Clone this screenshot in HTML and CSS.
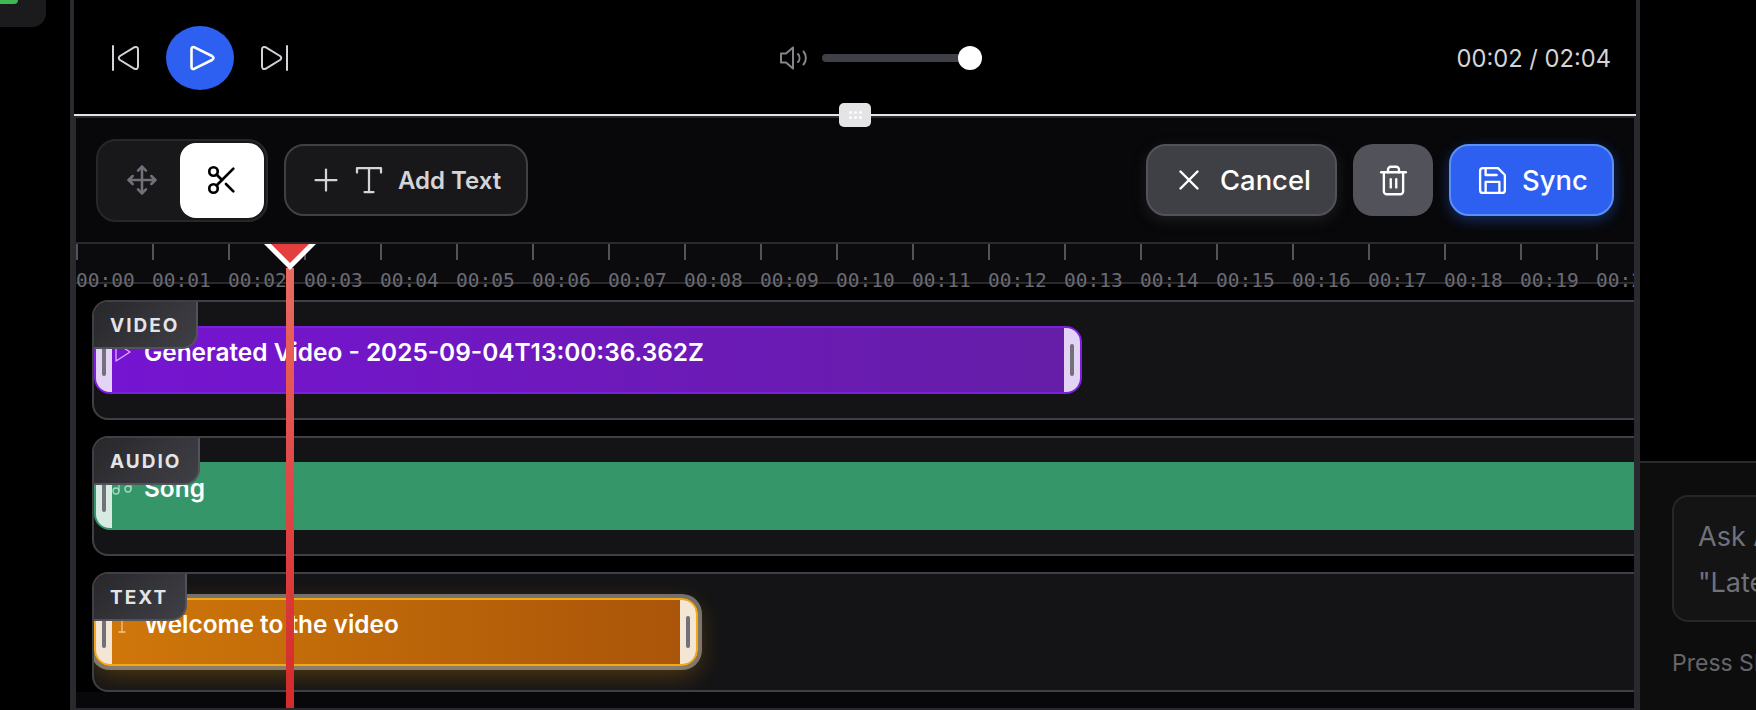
FILE: index.html
```html
<!DOCTYPE html>
<html lang="en-US">
<head>
   <meta charset="UTF-8"><title>timeline editor</title>
   <link rel="stylesheet" href="styles.css">
</head> <body>

<nav class="sidebar">
   <div class="app-chip"><span class="app-dot"></span></div>
</nav>

<main class="editor">

   <section class="player">
      <div class="transport">
         <button class="icon-btn" aria-label="previous">
            <svg width="27" height="26" viewBox="0 0 27 26"><path d="M1 1v24"/><path d="M22.5 2.2 8 11q-2.5 2 0 4l14.5 8.8q3.5 1.2 3.5-2.8V5q0-4-3.5-2.8z"/></svg>
         </button>
         <button class="play-btn" aria-label="play">
            <svg width="25" height="26" viewBox="0 0 25 26"><path d="M4.500 2.300 22 11q3 2 0 4L4.500 23.700q-3 1.300-3-2.200V4.500q0-3.500 3-2.200z"/></svg>
         </button>
         <button class="icon-btn" aria-label="next">
            <svg width="27" height="26" viewBox="0 0 27 26"><path d="M26 1v24"/><path d="M4.500 2.200 19 11q2.500 2 0 4L4.500 23.800Q1 25 1 21V5q0-4 3.500-2.800z"/></svg>
         </button>
      </div>

      <div class="volume">
         <svg class="volume-icon" width="30" height="24" viewBox="0 0 30 24"><path d="M14 1.500 7 7.500H2v9h5l7 6z"/><path d="M19 8a6 6 0 0 1 0 8"/><path d="M24.500 5.500a10 10 0 0 1 0 13"/></svg>
         <div class="volume-track"><span class="volume-thumb"></span></div>
      </div>

      <div class="clock">00:02 / 02:04</div>

      <div class="resize-grip">
         <span></span><span></span><span></span><span></span><span></span><span></span>
      </div>
   </section>

   <section class="timeline">

      <div class="toolbar">
         <div class="toolbar-group">
            <div class="mode-switch">
               <button class="mode-btn">
                  <svg width="32" height="32" viewBox="0 0 24 24"><path d="m5 9-3 3 3 3"/><path d="m9 5 3-3 3 3"/><path d="m15 19-3 3-3-3"/><path d="m19 9 3 3-3 3"/><path d="M2 12h20"/><path d="M12 2v20"/></svg>
               </button>
               <button class="mode-btn active">
                  <svg width="34" height="34" viewBox="0 0 24 24"><circle cx="6" cy="6" r="3"/><path d="M8.120 8.120 12 12"/><path d="M20 4 8.120 15.880"/><circle cx="6" cy="18" r="3"/><path d="M14.800 14.800 20 20"/></svg>
               </button>
            </div>
            <button class="btn btn-add">
               <svg width="36" height="36" viewBox="0 0 24 24"><path d="M5 12h14"/><path d="M12 5v14"/></svg>
               <svg width="36" height="36" viewBox="0 0 24 24"><path d="M4 7V4h16v3"/><path d="M9 20h6"/><path d="M12 4v16"/></svg>
               <span>Add Text</span>
            </button>
         </div>

         <div class="toolbar-group">
            <button class="btn btn-cancel">
               <svg width="34" height="34" viewBox="0 0 24 24"><path d="M18 6 6 18"/><path d="m6 6 12 12"/></svg>
               <span>Cancel</span>
            </button>
            <button class="btn btn-trash" aria-label="delete">
               <svg width="33" height="33" viewBox="0 0 24 24"><path d="M3 6h18"/><path d="M19 6v14c0 1-1 2-2 2H7c-1 0-2-1-2-2V6"/><path d="M8 6V4c0-1 1-2 2-2h4c1 0 2 1 2 2v2"/><path d="M10 11v6"/><path d="M14 11v6"/></svg>
            </button>
            <button class="btn btn-sync">
               <svg width="33" height="33" viewBox="0 0 24 24"><path d="M19 21H5a2 2 0 0 1-2-2V5a2 2 0 0 1 2-2h11l5 5v11a2 2 0 0 1-2 2z"/><path d="M17 21v-8H7v8"/><path d="M7 3v5h8"/></svg>
               <span>Sync</span>
            </button>
         </div>
      </div>

      <div class="ruler">
         <div class="mark"><i></i><span>00:00</span></div>
         <div class="mark"><i></i><span>00:01</span></div>
         <div class="mark"><i></i><span>00:02</span></div>
         <div class="mark"><i></i><span>00:03</span></div>
         <div class="mark"><i></i><span>00:04</span></div>
         <div class="mark"><i></i><span>00:05</span></div>
         <div class="mark"><i></i><span>00:06</span></div>
         <div class="mark"><i></i><span>00:07</span></div>
         <div class="mark"><i></i><span>00:08</span></div>
         <div class="mark"><i></i><span>00:09</span></div>
         <div class="mark"><i></i><span>00:10</span></div>
         <div class="mark"><i></i><span>00:11</span></div>
         <div class="mark"><i></i><span>00:12</span></div>
         <div class="mark"><i></i><span>00:13</span></div>
         <div class="mark"><i></i><span>00:14</span></div>
         <div class="mark"><i></i><span>00:15</span></div>
         <div class="mark"><i></i><span>00:16</span></div>
         <div class="mark"><i></i><span>00:17</span></div>
         <div class="mark"><i></i><span>00:18</span></div>
         <div class="mark"><i></i><span>00:19</span></div>
         <div class="mark"><i></i><span>00:20</span></div>
      </div>

      <div class="tracks">
         <div class="track">
            <div class="track-label">VIDEO</div>
            <div class="clip clip-video">
               <div class="handle"><b></b></div>
               <div class="clip-body">
                  <svg width="24" height="24" viewBox="0 0 24 24"><path d="m6 3 14 9-14 9z"/></svg>
                  <span>Generated Video - 2025-09-04T13:00:36.362Z</span>
               </div>
               <div class="handle"><b></b></div>
            </div>
         </div>

         <div class="track">
            <div class="track-label">AUDIO</div>
            <div class="clip clip-audio">
               <div class="handle"><b></b></div>
               <div class="clip-body">
                  <svg width="24" height="24" viewBox="0 0 24 24"><path d="M9 15V3l12-2v12"/><circle cx="6" cy="15" r="3"/><circle cx="18" cy="13" r="3"/></svg>
                  <span>Song</span>
               </div>
            </div>
         </div>

         <div class="track">
            <div class="track-label">TEXT</div>
            <div class="clip clip-text">
               <div class="handle"><b></b></div>
               <div class="clip-body">
                  <svg width="24" height="24" viewBox="0 0 24 24"><path d="M4 7V4h16v3"/><path d="M9 20h6"/><path d="M12 4v16"/></svg>
                  <span>Welcome to the video</span>
               </div>
               <div class="handle"><b></b></div>
            </div>
         </div>
      </div>

      <div class="playhead">
         <svg class="playhead-cap" width="52" height="26" viewBox="0 0 52 26"><path class="cap-edge" d="M0 0h52L26 26z"/><path class="cap-fill" d="M7 0h38L26 19z"/></svg>
      </div>
   </section>
</main>

<aside class="assistant">
   <div class="prompt">Ask AI to edit your video<br>"Latest clip first"</div>
   <p class="prompt-hint">Press Shift + Enter for a new line</p>
</aside>

</body> </html>
```

FILE: styles.css
```css
* {
   box-sizing: border-box;
}

body {
   margin: 0;
   height: 710px;
   display: flex;
   overflow: hidden;
   background: #000;
   font-family: Inter, "Liberation Sans", sans-serif;
}

button {
   font-family: inherit;
   border: none;
   padding: 0;
   cursor: pointer;
}

svg {
   fill: none;
   stroke: currentColor;
   stroke-linecap: round;
   stroke-linejoin: round;
   flex-shrink: 0;
   display: block;
}

/* sidebar */

.sidebar {
   width: 70px;
   flex-shrink: 0;
}

.app-chip {
   width: 46px;
   height: 27px;
   background: #1b1b1d;
   border-bottom-right-radius: 14px;
}

.app-dot {
   display: block;
   width: 18px;
   height: 4px;
   background: #3fb950;
   border-bottom-right-radius: 14px;
}

/* editor */

.editor {
   width: 1570px;
   flex-shrink: 0;
   border-left: 4px solid #2a2a2e;
   border-right: 4px solid #2a2a2e;
   display: flex;
   flex-direction: column;
}

.player {
   position: relative;
   height: 116px;
   flex-shrink: 0;
   padding: 2px 25px 0 38px;
   display: flex;
   align-items: center;
   justify-content: space-between;
   border-bottom: 2px solid #e4e4e7;
   z-index: 3;
}

.transport {
   display: flex;
   align-items: center;
   gap: 27px;
}

.icon-btn {
   background: none;
   color: #d4d4d8;
}

.icon-btn svg {
   stroke-width: 2;
}

.play-btn {
   width: 68px;
   height: 64px;
   border-radius: 50%;
   background: #2d60f0;
   color: #fff;
   display: flex;
   align-items: center;
   justify-content: center;
}

.play-btn svg {
   margin-left: 4px;
   stroke-width: 2.6;
}

.volume {
   display: flex;
   align-items: center;
   gap: 13px;
   margin-left: 16px;
}

.volume-icon {
   color: #85858b;
   stroke-width: 2;
}

.volume-track {
   width: 160px;
   height: 8px;
   border-radius: 4px;
   background: #3f3f46;
   position: relative;
}

.volume-thumb {
   position: absolute;
   right: 0;
   top: -8px;
   width: 24px;
   height: 24px;
   border-radius: 50%;
   background: #fff;
}

.clock {
   font-size: 23.7px;
   color: #d4d4d8;
   white-space: nowrap;
}

.resize-grip {
   position: absolute;
   left: 765px;
   top: 103px;
   width: 32px;
   height: 24px;
   border-radius: 5px;
   background: #e4e4e7;
   display: grid;
   grid-template-columns: repeat(3, 3px);
   grid-auto-rows: 3px;
   gap: 2px;
   justify-content: center;
   align-content: center;
}

.resize-grip span {
   background: #fff;
   border-radius: 50%;
}

/* timeline panel */

.timeline {
   position: relative;
   flex: 1;
   min-height: 0;
   border: 2px solid #2a2a2e;
   background: #08080a;
   overflow: hidden;
}

.toolbar {
   height: 124px;
   padding: 0 20px;
   display: flex;
   align-items: center;
   justify-content: space-between;
}

.toolbar-group {
   display: flex;
   align-items: center;
   gap: 16px;
}

.mode-switch {
   display: grid;
   grid-template-columns: 80px 84px;
   height: 83px;
   padding: 2px;
   background: #18181b;
   border: 2px solid #27272a;
   border-radius: 20px;
}

.mode-btn {
   background: none;
   color: #71717a;
   border-radius: 16px;
   display: flex;
   align-items: center;
   justify-content: center;
}

.mode-btn svg {
   stroke-width: 1.9;
}

.mode-btn:not(.active) svg {
   margin-left: 4px;
}

.mode-btn.active {
   background: #fff;
   color: #000;
}

.btn {
   height: 72px;
   border-radius: 20px;
   display: flex;
   align-items: center;
   font-weight: 600;
   white-space: nowrap;
}

.btn svg {
   stroke-width: 1.7;
}

.btn-add {
   width: 244px;
   padding-left: 22px;
   gap: 0;
   font-size: 24px;
   color: #d4d4d8;
   background: #18181b;
   border: 2px solid #3f3f46;
}

.btn-add svg {
   stroke-width: 1.5;
}

.btn-add svg + svg {
   margin-left: 7px;
}

.btn-add span {
   margin-left: 11px;
}

.btn-cancel {
   width: 191px;
   padding-left: 24px;
   gap: 14px;
   font-size: 27.4px;
   font-weight: 500;
   color: #fff;
   background: #3f3f46;
   border: 2px solid #52525b;
   box-shadow: 0 4px 14px rgba(70, 70, 78, .35);
}

.btn-trash {
   width: 80px;
   justify-content: center;
   color: #fff;
   background: #52525b;
}

.btn-sync {
   width: 165px;
   padding-left: 25px;
   gap: 13px;
   font-size: 27.4px;
   font-weight: 500;
   color: #fff;
   background: #2d60f0;
   border: 2px solid #5b90f7;
   box-shadow: 0 4px 14px rgba(37, 99, 235, .4);
}

/* ruler */

.ruler {
   position: relative;
   z-index: 1;
   height: 42px;
   display: flex;
   border-top: 2px solid #2a2a2e;
   border-bottom: 2px solid #2a2a2e;
   background: #0b0b0e;
}

.mark {
   width: 76px;
   flex-shrink: 0;
}

.mark i {
   display: block;
   width: 2px;
   height: 16px;
   background: #52525b;
}

.mark span {
   display: block;
   margin-top: 11px;
   font: 19.5px/20px "DejaVu Sans Mono", monospace;
   color: #6a6a72;
   white-space: nowrap;
}

/* tracks */

.tracks {
   background: #000;
   padding: 16px 0 0 16px;
   display: flex;
   flex-direction: column;
   gap: 16px;
}

.track {
   position: relative;
   height: 120px;
   margin-right: -24px;
   padding-top: 24px;
   background: #141416;
   border: 2px solid #3f3f46;
   border-radius: 16px;
   overflow: hidden;
}

.track-label {
   position: absolute;
   left: -2px;
   top: -2px;
   height: 49px;
   padding: 3px 17px 0 18px;
   display: flex;
   align-items: center;
   font-size: 19px;
   font-weight: 700;
   letter-spacing: 2px;
   color: #e4e4e7;
   background: linear-gradient(135deg, #27272a, #3f3f46);
   border-right: 2px solid #52525b;
   border-bottom: 2px solid #52525b;
   border-radius: 16px 0 16px 0;
   z-index: 2;
}

.clip {
   height: 68px;
   display: flex;
   border: 2px solid;
   border-radius: 16px;
   overflow: hidden;
}

.clip-body {
   flex: 1;
   display: flex;
   align-items: flex-start;
   gap: 10px;
   padding-top: 11px;
   font-size: 24.4px;
   font-weight: 600;
   line-height: 26px;
   color: #fff;
   white-space: nowrap;
   overflow: hidden;
}

.clip-body svg {
   margin-left: -2px;
   margin-top: 1px;
   stroke-width: 1.3;
}

.handle {
   width: 16px;
   flex-shrink: 0;
   display: flex;
   align-items: center;
   justify-content: center;
}

.handle b {
   width: 4px;
   height: 32px;
   border-radius: 2px;
   background: #71717a;
}

.clip-video {
   width: 988px;
   border-color: #7c1fdc;
   background: linear-gradient(90deg, #7614d2, #651ea6);
}

.clip-video svg {
   color: #d8b4fe;
}

.clip-video .handle {
   background: #e3d3f5;
}

.clip-audio {
   width: 1620px;
   border-color: #35966a;
   border-radius: 16px 0 0 16px;
   background: #35966a;
}

.clip-audio svg {
   color: #a7d8c0;
}

.clip-audio .handle {
   background: #d7ebe2;
}

.clip-text {
   width: 604px;
   border-color: #f5a817;
   background: linear-gradient(90deg, #d0780a, #a95409);
   box-shadow: 0 0 0 4px rgba(255, 255, 255, .38), 0 8px 26px rgba(245, 158, 11, .3);
}

.clip-text svg {
   color: #f0c48a;
}

.clip-text .handle {
   background: #f5e5d3;
}

/* playhead */

.playhead {
   position: absolute;
   left: 210px;
   top: 150px;
   bottom: 0;
   width: 8px;
   background: linear-gradient(#ea6a62, #e04a4a 45%, #d42a2a);
   z-index: 2;
}

.playhead-cap {
   position: absolute;
   left: -22px;
   top: -24px;
   stroke: none;
}

.cap-edge {
   fill: #fff;
}

.cap-fill {
   fill: #e53e3e;
}

/* assistant */

.assistant {
   flex: 1;
   margin-top: 461px;
   padding: 32px 0 0 32px;
   background: #0d0d0d;
   border-top: 2px solid #2a2a2e;
   white-space: nowrap;
}

.prompt {
   width: 320px;
   height: 127px;
   padding: 17px 24px;
   font-size: 27px;
   line-height: 46px;
   color: #71717a;
   background: #141414;
   border: 2px solid #27272a;
   border-radius: 16px;
}

.prompt-hint {
   margin: 27px 0 0;
   font-size: 23px;
   color: #65656b;
}
```
